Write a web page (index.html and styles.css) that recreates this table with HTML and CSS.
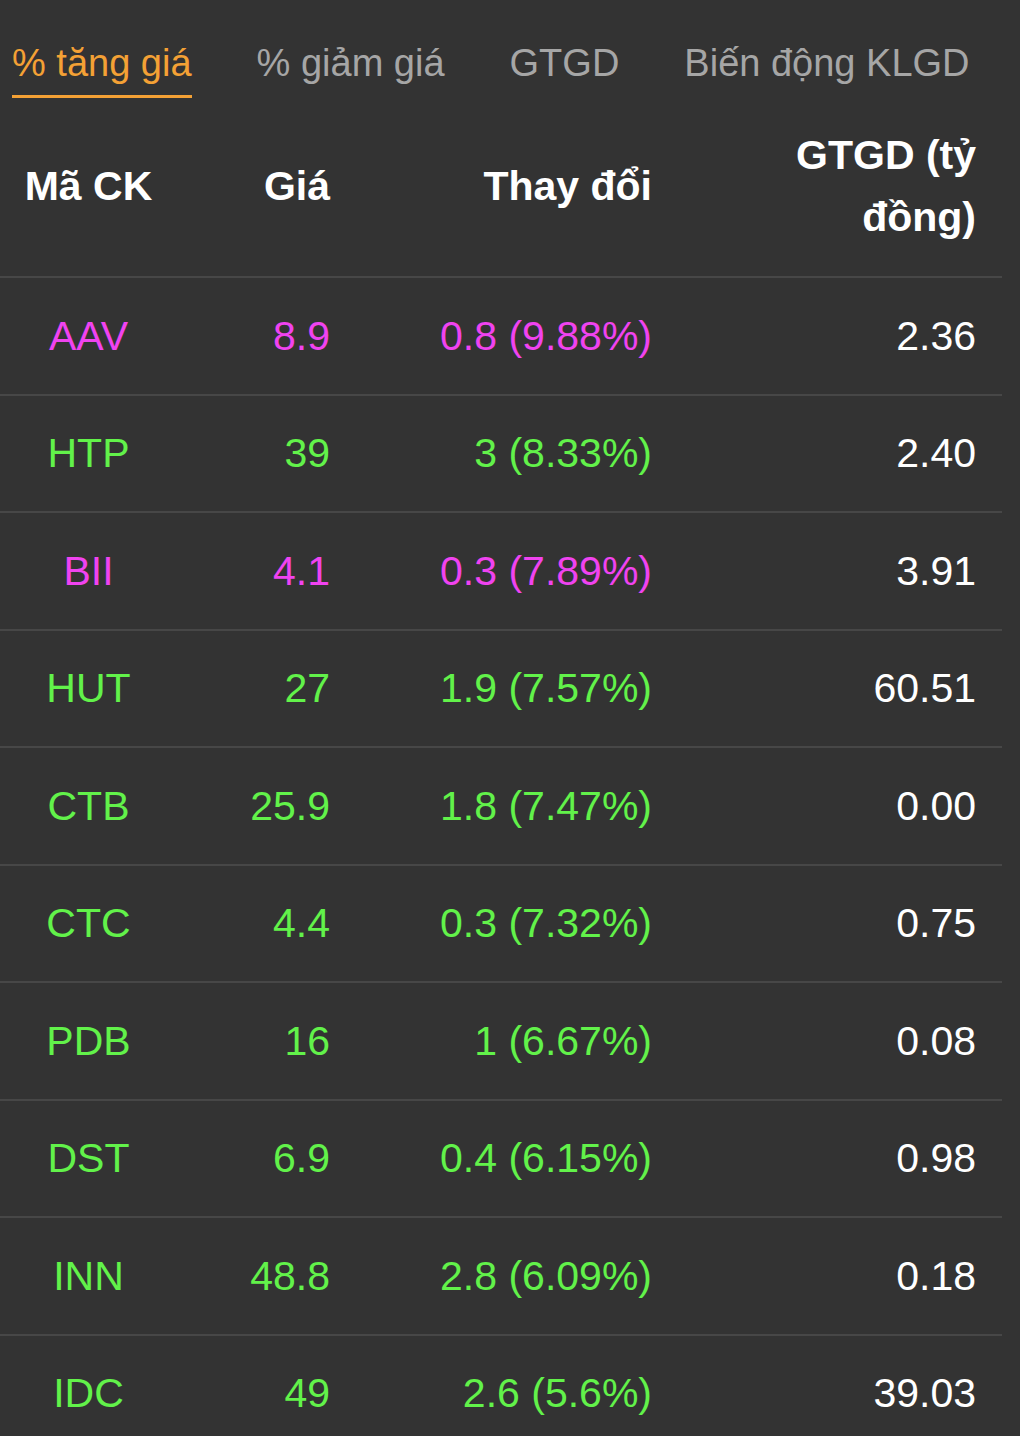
FILE: index.html
```html
<!DOCTYPE html>
<html lang="vi">
<head>
    <meta charset="UTF-8">
    <meta name="viewport" content="width=device-width, initial-scale=1.0">
    <title>Top cổ phiếu</title>
    <link rel="stylesheet" href="styles.css">
</head>
<body>
    <div class="board">
        <div class="tabs">
            <div class="tab active">% tăng giá</div>
            <div class="tab">% giảm giá</div>
            <div class="tab">GTGD</div>
            <div class="tab">Biến động KLGD</div>
        </div>
        <div class="stock-table">
            <div class="row head">
                <div class="cell code">Mã CK</div>
                <div class="cell num">Giá</div>
                <div class="cell num">Thay đổi</div>
                <div class="cell num value">GTGD (tỷ<br>đồng)</div>
            </div>
            <div class="row ceil">
                <div class="cell code">AAV</div>
                <div class="cell num">8.9</div>
                <div class="cell num">0.8 (9.88%)</div>
                <div class="cell num value">2.36</div>
            </div>
            <div class="row up">
                <div class="cell code">HTP</div>
                <div class="cell num">39</div>
                <div class="cell num">3 (8.33%)</div>
                <div class="cell num value">2.40</div>
            </div>
            <div class="row ceil">
                <div class="cell code">BII</div>
                <div class="cell num">4.1</div>
                <div class="cell num">0.3 (7.89%)</div>
                <div class="cell num value">3.91</div>
            </div>
            <div class="row up">
                <div class="cell code">HUT</div>
                <div class="cell num">27</div>
                <div class="cell num">1.9 (7.57%)</div>
                <div class="cell num value">60.51</div>
            </div>
            <div class="row up">
                <div class="cell code">CTB</div>
                <div class="cell num">25.9</div>
                <div class="cell num">1.8 (7.47%)</div>
                <div class="cell num value">0.00</div>
            </div>
            <div class="row up">
                <div class="cell code">CTC</div>
                <div class="cell num">4.4</div>
                <div class="cell num">0.3 (7.32%)</div>
                <div class="cell num value">0.75</div>
            </div>
            <div class="row up">
                <div class="cell code">PDB</div>
                <div class="cell num">16</div>
                <div class="cell num">1 (6.67%)</div>
                <div class="cell num value">0.08</div>
            </div>
            <div class="row up">
                <div class="cell code">DST</div>
                <div class="cell num">6.9</div>
                <div class="cell num">0.4 (6.15%)</div>
                <div class="cell num value">0.98</div>
            </div>
            <div class="row up">
                <div class="cell code">INN</div>
                <div class="cell num">48.8</div>
                <div class="cell num">2.8 (6.09%)</div>
                <div class="cell num value">0.18</div>
            </div>
            <div class="row up">
                <div class="cell code">IDC</div>
                <div class="cell num">49</div>
                <div class="cell num">2.6 (5.6%)</div>
                <div class="cell num value">39.03</div>
            </div>
        </div>
    </div>
</body>
</html>
```

FILE: styles.css
```css
body {
    margin: 0;
    padding: 0;
    background-color: #333333;
    font-family: "Liberation Sans", Arial, sans-serif;
}
.board {
    width: 1002px;
}
.tabs {
    display: flex;
    gap: 65px;
    padding: 40px 0 0 12px;
}
.tab {
    font-size: 38px;
    line-height: 46px;
    padding-bottom: 9px;
    color: #a6a6a6;
    border-bottom: 3px solid transparent;
    white-space: nowrap;
}
.tab.active {
    color: #f4a135;
    border-bottom-color: #f4a135;
}
.row {
    display: grid;
    grid-template-columns: 177px 179px 322px 324px;
    align-items: center;
    height: 117.5px;
    box-sizing: border-box;
    border-top: 2px solid #474747;
    font-size: 41px;
    line-height: 48px;
}
.row.head {
    height: 178px;
    border-top: none;
    font-weight: bold;
    color: #fff;
    line-height: 62px;
    padding-bottom: 2px;
}
.cell.code {
    text-align: center;
}
.cell.num {
    text-align: right;
    padding-right: 26px;
    white-space: nowrap;
}
.cell.value {
    color: #fff;
}
.row.ceil {
    color: #f043f0;
}
.row.up {
    color: #62f24a;
}
```
